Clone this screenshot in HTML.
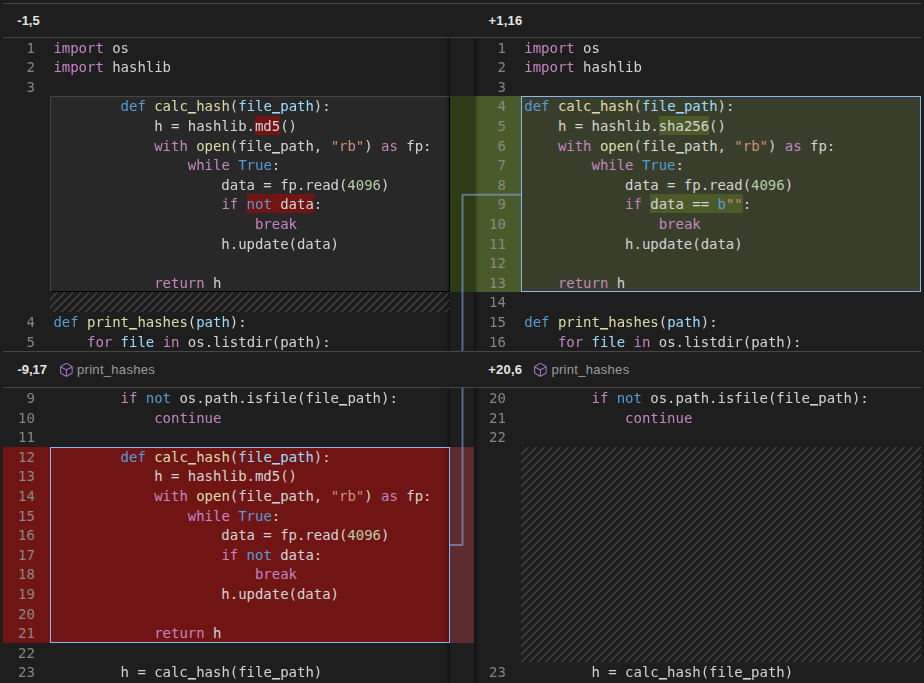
<!DOCTYPE html>
<html lang="en">
<head>
<meta charset="utf-8">
<title>Diff</title>
<style>
html,body{margin:0;padding:0;}
body{width:924px;height:683px;overflow:hidden;background:#1e1e1e;position:relative;font-family:"Liberation Sans",sans-serif;}
#root{position:absolute;left:0;top:0;width:924px;height:683px;overflow:hidden;background:#1e1e1e;}
.abs{position:absolute;}
.pane{position:absolute;overflow:hidden;background:#1e1e1e;}
.ln,.cl{position:absolute;height:20px;line-height:20px;font-family:"DejaVu Sans Mono","Liberation Mono",monospace;font-size:14px;white-space:pre;letter-spacing:-0.03px;}
.ln{width:40px;text-align:right;color:#858585;}
.cl{color:#d4d4d4;}
.hdr{position:absolute;left:3px;width:918px;background:#1e1e1e;border-top:1px solid #454545;border-bottom:1px solid #454545;box-sizing:border-box;}
.hb{position:absolute;font-weight:bold;font-size:13px;color:#e4e4e4;line-height:16px;white-space:pre;}
.hn{position:absolute;font-size:13px;color:#9d9d9d;line-height:16px;white-space:pre;letter-spacing:0.3px;}
.cl i{font-style:normal;position:relative;top:-1px;background:linear-gradient(currentColor,currentColor) no-repeat 0 15px/100% 1px;}
.ico{position:absolute;}
.gl{position:absolute;left:0;top:0;width:924px;height:683px;will-change:transform;}
.hatch{position:absolute;background-image:linear-gradient(-45deg,rgba(204,204,204,.2) 12.5%,transparent 12.5%,transparent 50%,rgba(204,204,204,.2) 50%,rgba(204,204,204,.2) 62.5%,transparent 62.5%,transparent 100%);background-size:8px 8px;}
.hl{padding:2px 0 1px;}
.tl .hl{background:#701414;}
.tr .hl{background:#4c5a2a;}
</style>
</head>
<body>
<div id="root">

<!-- ===== backgrounds ===== -->
<div class="pane" style="left:0;top:0;width:924px;height:683px;"></div>
<!-- top: moved-compare box fill, hatch, green fills -->
<div class="abs" style="left:50px;top:96px;width:400px;height:196px;background:#282828;"></div>
<div class="hatch" style="left:50px;top:292px;width:400px;height:20px;"></div>
<div class="abs" style="left:450px;top:96px;width:24px;height:196px;background:#2d3c17;"></div>
<div class="abs" style="left:474px;top:96px;width:47px;height:196px;background:#4a5b2b;"></div>
<div class="abs" style="left:521px;top:96px;width:400px;height:196px;background:#383e2a;"></div>
<!-- bottom: red fills, hatch -->
<div class="abs" style="left:3px;top:447px;width:447px;height:196px;background:#701414;"></div>
<div class="abs" style="left:450px;top:447px;width:24px;height:196px;background:#5c2c2e;"></div>
<div class="hatch" style="left:521px;top:447px;width:400px;height:215px;"></div>

<!-- gutter shadows -->
<div class="abs" style="left:444px;top:38px;width:6px;height:645px;background:linear-gradient(90deg,rgba(0,0,0,0),rgba(0,0,0,.12) 50%,rgba(0,0,0,.42));"></div>
<div class="abs" style="left:474px;top:38px;width:6px;height:645px;background:linear-gradient(90deg,rgba(0,0,0,.42),rgba(0,0,0,.12) 50%,rgba(0,0,0,0));"></div>

<!-- box borders -->
<div class="abs" style="left:50px;top:96px;width:400px;height:196px;box-sizing:border-box;border-top:1px solid #454545;border-left:1px solid #454545;border-right:1px solid #000;border-bottom:1px solid #000;"></div>
<div class="abs" style="left:521px;top:96px;width:400px;height:196px;box-sizing:border-box;border:1px solid #8ab4f8;"></div>
<div class="abs" style="left:50px;top:447px;width:400px;height:196px;box-sizing:border-box;border:1px solid #8ab4f8;"></div>

<!-- code text -->
<div class="tr">
<div class="ln" style="top:96px;left:465.8px;color:#888a80">4</div>
<div class="cl" style="top:96px;left:524.3px"><span style="color:#569cd6">def</span> <span style="color:#dcdcaa">calc<i>_</i>hash</span>(<span style="color:#9cdcfe">file<i>_</i>path</span>):</div>
<div class="ln" style="top:116px;left:465.8px;color:#888a80">5</div>
<div class="cl" style="top:116px;left:524.3px">    h = hashlib.<span class="hl">sha256</span>()</div>
<div class="ln" style="top:136px;left:465.8px;color:#888a80">6</div>
<div class="cl" style="top:136px;left:524.3px">    <span style="color:#c586c0">with</span> <span style="color:#dcdcaa">open</span>(file<i>_</i>path, <span style="color:#ce9178">"rb"</span>) <span style="color:#c586c0">as</span> fp:</div>
<div class="ln" style="top:155px;left:465.8px;color:#888a80">7</div>
<div class="cl" style="top:155px;left:524.3px">        <span style="color:#c586c0">while</span> <span style="color:#569cd6">True</span>:</div>
<div class="ln" style="top:175px;left:465.8px;color:#888a80">8</div>
<div class="cl" style="top:175px;left:524.3px">            data = fp.read(<span style="color:#b5cea8">4096</span>)</div>
<div class="ln" style="top:194px;left:465.8px;color:#888a80">9</div>
<div class="cl" style="top:194px;left:524.3px">            <span style="color:#c586c0">if</span> <span class="hl">data == <span style="color:#569cd6">b</span><span style="color:#ce9178">""</span></span>:</div>
<div class="ln" style="top:214px;left:465.8px;color:#888a80">10</div>
<div class="cl" style="top:214px;left:524.3px">                <span style="color:#c586c0">break</span></div>
<div class="ln" style="top:234px;left:465.8px;color:#888a80">11</div>
<div class="cl" style="top:234px;left:524.3px">            h.update(data)</div>
<div class="ln" style="top:253px;left:465.8px;color:#888a80">12</div>
<div class="ln" style="top:273px;left:465.8px;color:#888a80">13</div>
<div class="cl" style="top:273px;left:524.3px">    <span style="color:#c586c0">return</span> h</div>
</div>
<div class="bl">
<div class="ln" style="top:447px;left:-5.100000000000001px;color:#8c8684">12</div>
<div class="cl" style="top:447px;left:53.4px">        <span style="color:#569cd6">def</span> <span style="color:#dcdcaa">calc<i>_</i>hash</span>(<span style="color:#9cdcfe">file<i>_</i>path</span>):</div>
<div class="ln" style="top:466px;left:-5.100000000000001px;color:#8c8684">13</div>
<div class="cl" style="top:466px;left:53.4px">            h = hashlib.md5()</div>
<div class="ln" style="top:486px;left:-5.100000000000001px;color:#8c8684">14</div>
<div class="cl" style="top:486px;left:53.4px">            <span style="color:#c586c0">with</span> <span style="color:#dcdcaa">open</span>(file<i>_</i>path, <span style="color:#ce9178">"rb"</span>) <span style="color:#c586c0">as</span> fp:</div>
<div class="ln" style="top:506px;left:-5.100000000000001px;color:#8c8684">15</div>
<div class="cl" style="top:506px;left:53.4px">                <span style="color:#c586c0">while</span> <span style="color:#569cd6">True</span>:</div>
<div class="ln" style="top:525px;left:-5.100000000000001px;color:#8c8684">16</div>
<div class="cl" style="top:525px;left:53.4px">                    data = fp.read(<span style="color:#b5cea8">4096</span>)</div>
<div class="ln" style="top:545px;left:-5.100000000000001px;color:#8c8684">17</div>
<div class="cl" style="top:545px;left:53.4px">                    <span style="color:#c586c0">if</span> <span style="color:#569cd6">not</span> data:</div>
<div class="ln" style="top:564px;left:-5.100000000000001px;color:#8c8684">18</div>
<div class="cl" style="top:564px;left:53.4px">                        <span style="color:#c586c0">break</span></div>
<div class="ln" style="top:584px;left:-5.100000000000001px;color:#8c8684">19</div>
<div class="cl" style="top:584px;left:53.4px">                    h.update(data)</div>
<div class="ln" style="top:604px;left:-5.100000000000001px;color:#8c8684">20</div>
<div class="ln" style="top:623px;left:-5.100000000000001px;color:#8c8684">21</div>
<div class="cl" style="top:623px;left:53.4px">            <span style="color:#c586c0">return</span> h</div>
</div>
<div class="tl gl">
<div class="ln" style="top:38px;left:-5.100000000000001px">1</div>
<div class="cl" style="top:38px;left:53.4px"><span style="color:#c586c0">import</span> os</div>
<div class="ln" style="top:57px;left:-5.100000000000001px">2</div>
<div class="cl" style="top:57px;left:53.4px"><span style="color:#c586c0">import</span> hashlib</div>
<div class="ln" style="top:77px;left:-5.100000000000001px">3</div>
<div class="cl" style="top:96px;left:53.4px">        <span style="color:#569cd6">def</span> <span style="color:#dcdcaa">calc<i>_</i>hash</span>(<span style="color:#9cdcfe">file<i>_</i>path</span>):</div>
<div class="cl" style="top:116px;left:53.4px">            h = hashlib.<span class="hl">md5</span>()</div>
<div class="cl" style="top:136px;left:53.4px">            <span style="color:#c586c0">with</span> <span style="color:#dcdcaa">open</span>(file<i>_</i>path, <span style="color:#ce9178">"rb"</span>) <span style="color:#c586c0">as</span> fp:</div>
<div class="cl" style="top:155px;left:53.4px">                <span style="color:#c586c0">while</span> <span style="color:#569cd6">True</span>:</div>
<div class="cl" style="top:175px;left:53.4px">                    data = fp.read(<span style="color:#b5cea8">4096</span>)</div>
<div class="cl" style="top:194px;left:53.4px">                    <span style="color:#c586c0">if</span> <span class="hl"><span style="color:#569cd6">not</span> data</span>:</div>
<div class="cl" style="top:214px;left:53.4px">                        <span style="color:#c586c0">break</span></div>
<div class="cl" style="top:234px;left:53.4px">                    h.update(data)</div>
<div class="cl" style="top:273px;left:53.4px">            <span style="color:#c586c0">return</span> h</div>
<div class="ln" style="top:312px;left:-5.100000000000001px">4</div>
<div class="cl" style="top:312px;left:53.4px"><span style="color:#569cd6">def</span> <span style="color:#dcdcaa">print<i>_</i>hashes</span>(<span style="color:#9cdcfe">path</span>):</div>
<div class="ln" style="top:332px;left:-5.100000000000001px">5</div>
<div class="cl" style="top:332px;left:53.4px">    <span style="color:#c586c0">for</span> <span style="color:#9cdcfe">file</span> <span style="color:#c586c0">in</span> os.listdir(path):</div>
</div>
<div class="tr gl">
<div class="ln" style="top:38px;left:465.8px">1</div>
<div class="cl" style="top:38px;left:524.3px"><span style="color:#c586c0">import</span> os</div>
<div class="ln" style="top:57px;left:465.8px">2</div>
<div class="cl" style="top:57px;left:524.3px"><span style="color:#c586c0">import</span> hashlib</div>
<div class="ln" style="top:77px;left:465.8px">3</div>
<div class="ln" style="top:292px;left:465.8px">14</div>
<div class="ln" style="top:312px;left:465.8px">15</div>
<div class="cl" style="top:312px;left:524.3px"><span style="color:#569cd6">def</span> <span style="color:#dcdcaa">print<i>_</i>hashes</span>(<span style="color:#9cdcfe">path</span>):</div>
<div class="ln" style="top:332px;left:465.8px">16</div>
<div class="cl" style="top:332px;left:524.3px">    <span style="color:#c586c0">for</span> <span style="color:#9cdcfe">file</span> <span style="color:#c586c0">in</span> os.listdir(path):</div>
</div>
<div class="bl gl" style="top:388px;height:295px;overflow:hidden;">
<div class="abs" style="left:0;top:-388px;">
<div class="ln" style="top:388px;left:-5.100000000000001px">9</div>
<div class="cl" style="top:388px;left:53.4px">        <span style="color:#c586c0">if</span> <span style="color:#569cd6">not</span> os.path.isfile(file<i>_</i>path):</div>
<div class="ln" style="top:408px;left:-5.100000000000001px">10</div>
<div class="cl" style="top:408px;left:53.4px">            <span style="color:#c586c0">continue</span></div>
<div class="ln" style="top:427px;left:-5.100000000000001px">11</div>
<div class="ln" style="top:643px;left:-5.100000000000001px">22</div>
<div class="ln" style="top:662px;left:-5.100000000000001px">23</div>
<div class="cl" style="top:662px;left:53.4px">        h = calc<i>_</i>hash(file<i>_</i>path)</div>
<div class="ln" style="top:388px;left:465.8px">20</div>
<div class="cl" style="top:388px;left:524.3px">        <span style="color:#c586c0">if</span> <span style="color:#569cd6">not</span> os.path.isfile(file<i>_</i>path):</div>
<div class="ln" style="top:408px;left:465.8px">21</div>
<div class="cl" style="top:408px;left:524.3px">            <span style="color:#c586c0">continue</span></div>
<div class="ln" style="top:427px;left:465.8px">22</div>
<div class="ln" style="top:662px;left:465.8px">23</div>
<div class="cl" style="top:662px;left:524.3px">        h = calc<i>_</i>hash(file<i>_</i>path)</div>
</div>
</div>

<!-- move connector -->
<svg class="abs" style="left:440px;top:180px;" width="90" height="380" viewBox="440 180 90 380"><path d="M521 194.7 H462.5 V545 H450" fill="none" stroke="#8fb6ff" stroke-opacity=".5" stroke-width="2" stroke-linejoin="round"/></svg>

<!-- headers -->
<div class="hdr" style="top:3px;height:35px;"></div>
<div class="hb" style="left:17.3px;top:13px;">-1,5</div>
<div class="hb" style="left:488.4px;top:13px;letter-spacing:.25px;">+1,16</div>

<div class="hdr" style="top:351px;height:37px;"></div>
<div class="hb" style="left:17.4px;top:362px;">-9,17</div>
<svg class="ico" style="left:57.7px;top:362px" width="16.8" height="16" viewBox="0 0 16 16" preserveAspectRatio="none"><path fill="#b180d7" fill-opacity=".9" d="M13.51 4l-5-3h-1l-5 3-.49.86v6l.49.85 5 3h1l5-3 .49-.85v-6L13.51 4zm-6 9.56l-4.5-2.7V5.7l4.5 2.45v5.41zM3.27 4.7l4.74-2.84 4.74 2.84-4.74 2.59L3.27 4.7zm9.74 6.16l-4.5 2.7V8.15l4.5-2.45v5.16z"/></svg>
<div class="hn" style="left:77px;top:362px;">print_hashes</div>
<div class="hb" style="left:488.2px;top:362px;letter-spacing:.25px;">+20,6</div>
<svg class="ico" style="left:532.1px;top:362px" width="16.8" height="16" viewBox="0 0 16 16" preserveAspectRatio="none"><path fill="#b180d7" fill-opacity=".9" d="M13.51 4l-5-3h-1l-5 3-.49.86v6l.49.85 5 3h1l5-3 .49-.85v-6L13.51 4zm-6 9.56l-4.5-2.7V5.7l4.5 2.45v5.41zM3.27 4.7l4.74-2.84 4.74 2.84-4.74 2.59L3.27 4.7zm9.74 6.16l-4.5 2.7V8.15l4.5-2.45v5.16z"/></svg>
<div class="hn" style="left:551.4px;top:362px;">print_hashes</div>

</div>
</body>
</html>
